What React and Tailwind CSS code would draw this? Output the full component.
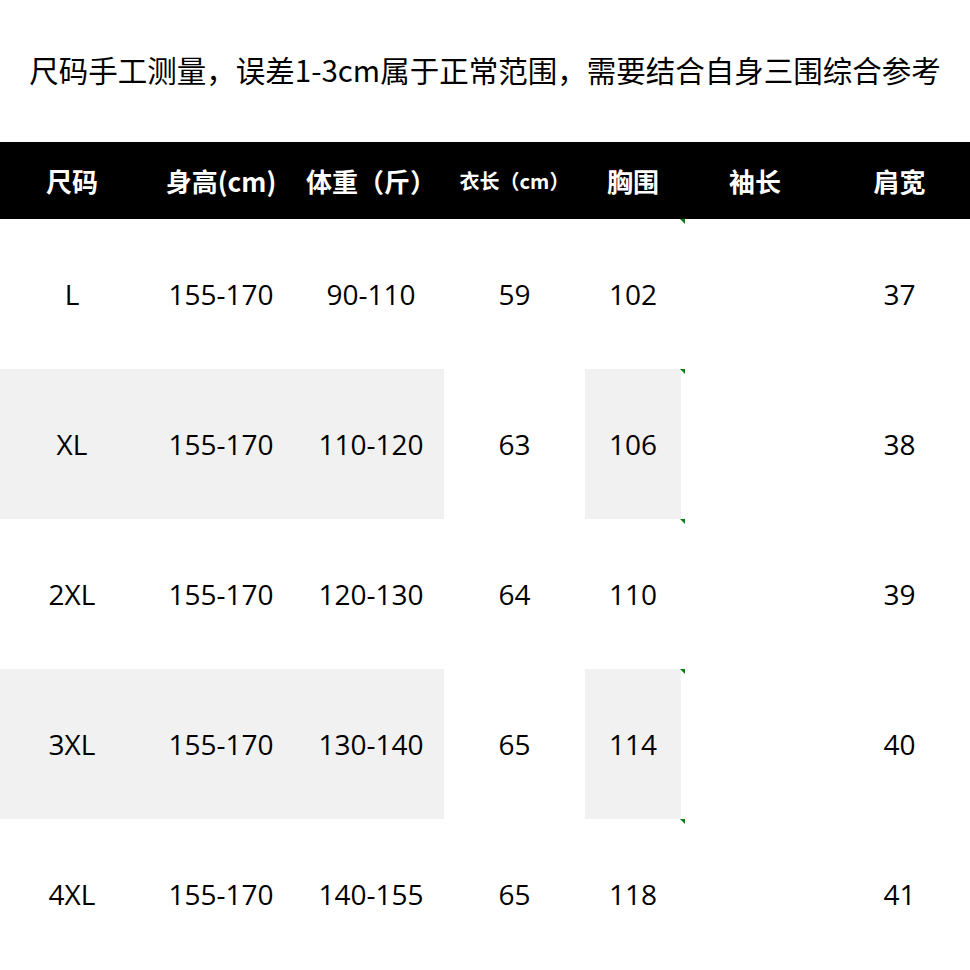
const headers = [
  { label: "尺码", cls: "text-[26px]" },
  { label: "身高(cm)", cls: "text-[26px]" },
  { label: "体重（斤）", cls: "text-[26px]" },
  { label: "衣长（cm）", cls: "text-[20px]" },
  { label: "胸围", cls: "text-[26px]" },
  { label: "袖长", cls: "text-[26px]" },
  { label: "肩宽", cls: "text-[26px]" },
];

const rows = [
  ["L", "155-170", "90-110", "59", "102", "", "37"],
  ["XL", "155-170", "110-120", "63", "106", "", "38"],
  ["2XL", "155-170", "120-130", "64", "110", "", "39"],
  ["3XL", "155-170", "130-140", "65", "114", "", "40"],
  ["4XL", "155-170", "140-155", "65", "118", "", "41"],
];

// little green corner flag, like a spreadsheet cell marker
function Mark() {
  return (
    <span className="absolute z-10 top-0 right-[-4px] w-0 h-0 border-t-[5px] border-l-[5px] border-t-[#0a7d12] border-l-transparent" />
  );
}

export default function App() {
  return (
    <div
      className="w-[970px] h-[970px] bg-white text-black overflow-hidden"
      style={{ fontFamily: '"Open Sans", "Noto Sans CJK SC", sans-serif' }}
    >
      <div className="h-[142px] flex items-center justify-center pb-[2px]">
        <p
          className="text-[29.5px] leading-none whitespace-nowrap"
          style={{ fontFamily: '"Noto Sans CJK SC", sans-serif' }}
        >
          尺码手工测量，误差1-3cm属于正常范围，需要结合自身三围综合参考
        </p>
      </div>

      <div className="grid grid-cols-[144px_154px_146px_141px_96px_148px_141px]">
        {headers.map((h, i) => (
          <div
            key={i}
            className={`h-[77px] bg-black text-white font-bold flex items-center justify-center whitespace-nowrap ${h.cls}`}
            style={{ fontFamily: '"Noto Sans CJK SC", sans-serif' }}
          >
            {h.label}
          </div>
        ))}

        {rows.map((r, ri) =>
          r.map((v, ci) => {
            const gray = ri % 2 === 1 && (ci < 3 || ci === 4);
            return (
              <div
                key={`${ri}-${ci}`}
                className={`relative h-[150px] flex items-center justify-center text-[28px] ${
                  gray ? "bg-[#f1f1f1]" : "bg-white"
                }`}
              >
                {v}
                {ci === 4 && <Mark />}
              </div>
            );
          })
        )}
      </div>
    </div>
  );
}
